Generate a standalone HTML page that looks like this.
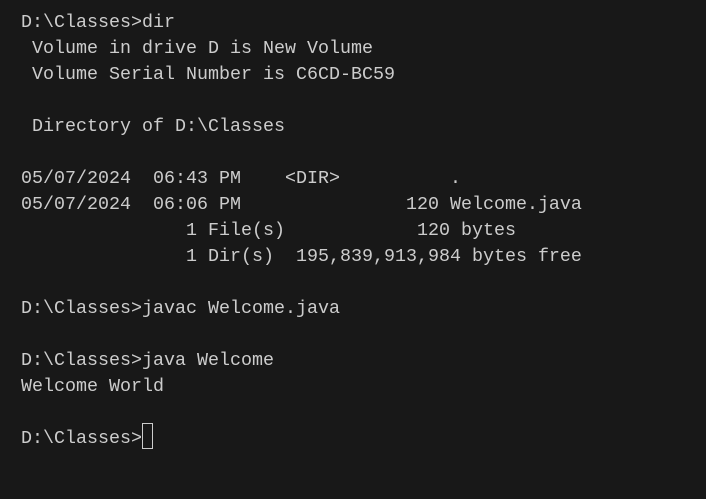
<!DOCTYPE html>
<html><head><meta charset="utf-8"><style>
html,body{margin:0;padding:0;background:#181818;width:706px;height:499px;overflow:hidden}
pre{margin:0;position:absolute;left:21px;top:10px;font-family:"Liberation Mono",monospace;font-size:18.33px;line-height:26px;color:#cccccc}
.cur{position:absolute;left:142px;top:423px;width:9px;height:24px;border:1px solid #cccccc}
</style></head><body>
<pre>D:\Classes&gt;dir
 Volume in drive D is New Volume
 Volume Serial Number is C6CD-BC59

 Directory of D:\Classes

05/07/2024  06:43 PM    &lt;DIR&gt;          .
05/07/2024  06:06 PM               120 Welcome.java
               1 File(s)            120 bytes
               1 Dir(s)  195,839,913,984 bytes free

D:\Classes&gt;javac Welcome.java

D:\Classes&gt;java Welcome
Welcome World

D:\Classes&gt;</pre>
<div class="cur"></div>
</body></html>
